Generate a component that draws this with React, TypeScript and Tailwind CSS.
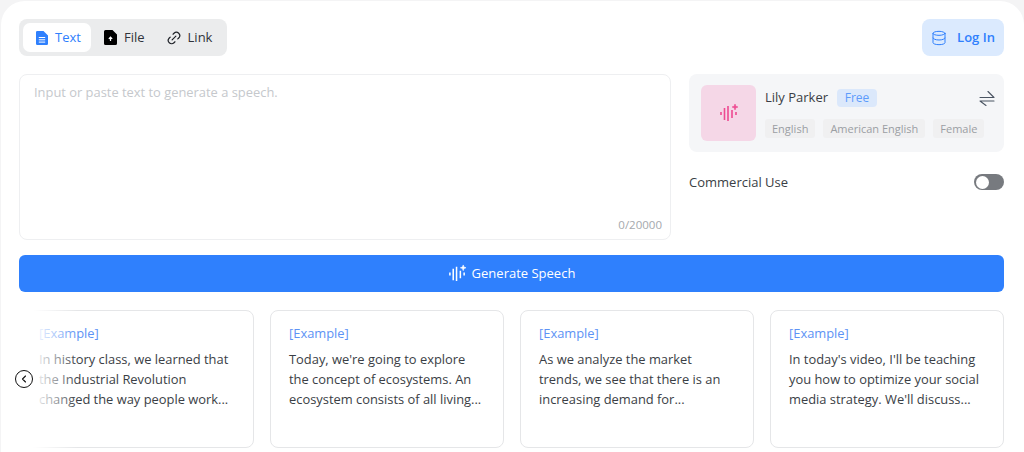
import React from "react";
import { ChevronLeft, Database, Link2 } from "lucide-react";

const examples = [
  "In history class, we learned that the Industrial Revolution changed the way people work...",
  "Today, we're going to explore the concept of ecosystems. An ecosystem consists of all living...",
  "As we analyze the market trends, we see that there is an increasing demand for...",
  "In today's video, I'll be teaching you how to optimize your social media strategy. We'll discuss...",
];

const WaveIcon = ({ className }: { className: string }) => (
  <svg viewBox="0 0 20 20" fill="none" stroke="currentColor" strokeWidth="1.6" strokeLinecap="butt" className={className}>
    <path d="M2 9v3M5.500 5v12M9 3v15M13 7v8M17 9v3" />
    <path d="M16 1l.8 2.200 2.200.8-2.200.8-.8 2.200-.8-2.200-2.200-.8 2.200-.8z" fill="currentColor" strokeWidth="0.6" />
  </svg>
);

const SwapIcon = () => (
  <svg viewBox="0 0 16 15" fill="none" stroke="#4b5563" strokeWidth="1.1" strokeLinecap="round" strokeLinejoin="round" className="w-4 h-[15px]">
    <path d="M1 6.500h14L9 0.500M15 10H1l6 4.500" />
  </svg>
);

const TextFileIcon = () => (
  <svg viewBox="0 0 12 14" className="w-[12px] h-[14px]">
    <path d="M1.200 0H7.500L12 4.500V12.800a1.200 1.200 0 0 1-1.200 1.200H1.200A1.200 1.200 0 0 1 0 12.800V1.200A1.200 1.200 0 0 1 1.200 0z" fill="#2f80fd" />
    <path d="M2.800 6.500h6.400M2.800 8.800h6.400M2.800 11.100h6.400" stroke="#fff" strokeWidth="1" />
  </svg>
);

const UploadFileIcon = () => (
  <svg viewBox="0 0 13 15" className="w-[13px] h-[15px]">
    <path d="M1.500 0H8.500L13 4.500V13.500a1.500 1.500 0 0 1-1.500 1.500h-10A1.500 1.500 0 0 1 0 13.500v-12A1.500 1.500 0 0 1 1.500 0z" fill="#000" />
    <path d="M6.500 11V7.500M4.800 8.800l1.700-1.700 1.700 1.700" stroke="#fff" strokeWidth="1.200" fill="none" />
  </svg>
);

const Tag = ({ label }: { label: string }) => (
  <span className="h-[19px] px-[7px] rounded-[3px] bg-[#f0f0f1] text-[11px] leading-[19px] whitespace-nowrap text-[#9b9ea3]">{label}</span>
);

export default function App() {
  return (
    <div className="h-[452px] overflow-hidden bg-[#f4f4f5] pl-px pr-0 pt-px font-['Open_Sans',sans-serif]">
      <div className="h-[480px] rounded-[24px] bg-white pl-[18px] pr-[20px] pt-[18px]">
        <div className="flex items-center justify-between">
          <div className="flex items-center h-[37px] w-[208px] rounded-[8px] bg-[#ebeced] px-[4px]">
            <div className="flex items-center h-[29px] w-[68px] rounded-[7px] bg-white pl-[13px] gap-[7px] text-[13px] text-[#2f80fd]">
              <TextFileIcon />
              Text
            </div>
            <div className="flex items-center ml-[13px] gap-[7px] text-[13px] text-[#30343b]">
              <UploadFileIcon />
              File
            </div>
            <div className="flex items-center ml-[21px] gap-[6px] text-[13px] text-[#30343b]">
              <Link2 size={16} strokeWidth={1.8} className="-rotate-45 text-[#1f2228]" />
              Link
            </div>
          </div>
          <div className="flex items-center justify-center gap-[10px] h-[37px] w-[82px] rounded-[8px] bg-[#dbeafe] text-[13px] font-semibold text-[#2f80fd]">
            <Database size={16} strokeWidth={1.5} />
            Log In
          </div>
        </div>

        <div className="flex gap-[18px] mt-[18px]">
          <div className="flex flex-col justify-between w-[652px] h-[166px] rounded-[8px] border border-[#eeeff1] pl-[14px] pr-[8px] pt-[7px] pb-[6px]">
            <p className="text-[12.900px] leading-[20px] text-[#c5c8cc]">Input or paste text to generate a speech.</p>
            <p className="self-end text-[11.500px] leading-[16px] text-[#a5a8ad]">0/20000</p>
          </div>
          <div className="flex-1">
            <div className="flex h-[78px] rounded-[8px] bg-[#f5f6f8] pl-[12px] pr-[9px] pt-[11px]">
              <div className="flex items-center justify-center w-[55px] h-[56px] rounded-[6px] bg-[#f5d7e7] text-[#ee4a92]">
                <WaveIcon className="w-[20px] h-[20px]" />
              </div>
              <div className="flex-1 pl-[9px]">
                <div className="flex items-center h-[24px] pt-[2px]">
                  <span className="text-[13px] text-[#3a3e45]">Lily Parker</span>
                  <span className="ml-[9px] h-[18px] w-[40px] rounded-[4px] bg-[#dbe8fb] text-center text-[12px] leading-[18px] text-[#5d9bfb]">Free</span>
                  <span className="ml-auto"><SwapIcon /></span>
                </div>
                <div className="flex gap-[8px] mt-[10px]">
                  <Tag label="English" />
                  <Tag label="American English" />
                  <Tag label="Female" />
                </div>
              </div>
            </div>
            <div className="flex items-center justify-between mt-[21px]">
              <span className="text-[13px] leading-[18px] text-[#3a3e45]">Commercial Use</span>
              <div className="flex items-center w-[30px] h-[16px] rounded-full bg-[#777a7f] pl-[2px]">
                <div className="w-[13px] h-[13px] rounded-full bg-white" />
              </div>
            </div>
          </div>
        </div>

        <div className="flex items-center justify-center gap-[5px] h-[37px] mt-[15px] rounded-[6px] bg-[#2f80fd] text-[13px] text-white">
          <WaveIcon className="w-[19px] h-[19px]" />
          Generate Speech
        </div>

        <div className="relative flex gap-[16px] mt-[18px] ml-px">
          {examples.map((text) => (
            <div key={text} className="w-[234px] h-[138px] shrink-0 rounded-[8px] border border-[#e5e6e8] px-[18px] pt-[12px] text-[12.900px] leading-[20px] text-[#3a3e45]">
              <p className="text-[#5d93f5]">[Example]</p>
              <p className="mt-[6px]">{text}</p>
            </div>
          ))}
          <div className="absolute left-[-2px] top-[-2px] bottom-[-2px] w-[60px] bg-gradient-to-r from-white from-[25%] to-transparent" />
          <div className="absolute left-[-5px] top-[60px] flex items-center justify-center w-[18px] h-[18px] rounded-full border-[1.5px] border-[#111] bg-white">
            <ChevronLeft size={12} strokeWidth={2.2} className="text-[#111]" />
          </div>
        </div>
      </div>
    </div>
  );
}
